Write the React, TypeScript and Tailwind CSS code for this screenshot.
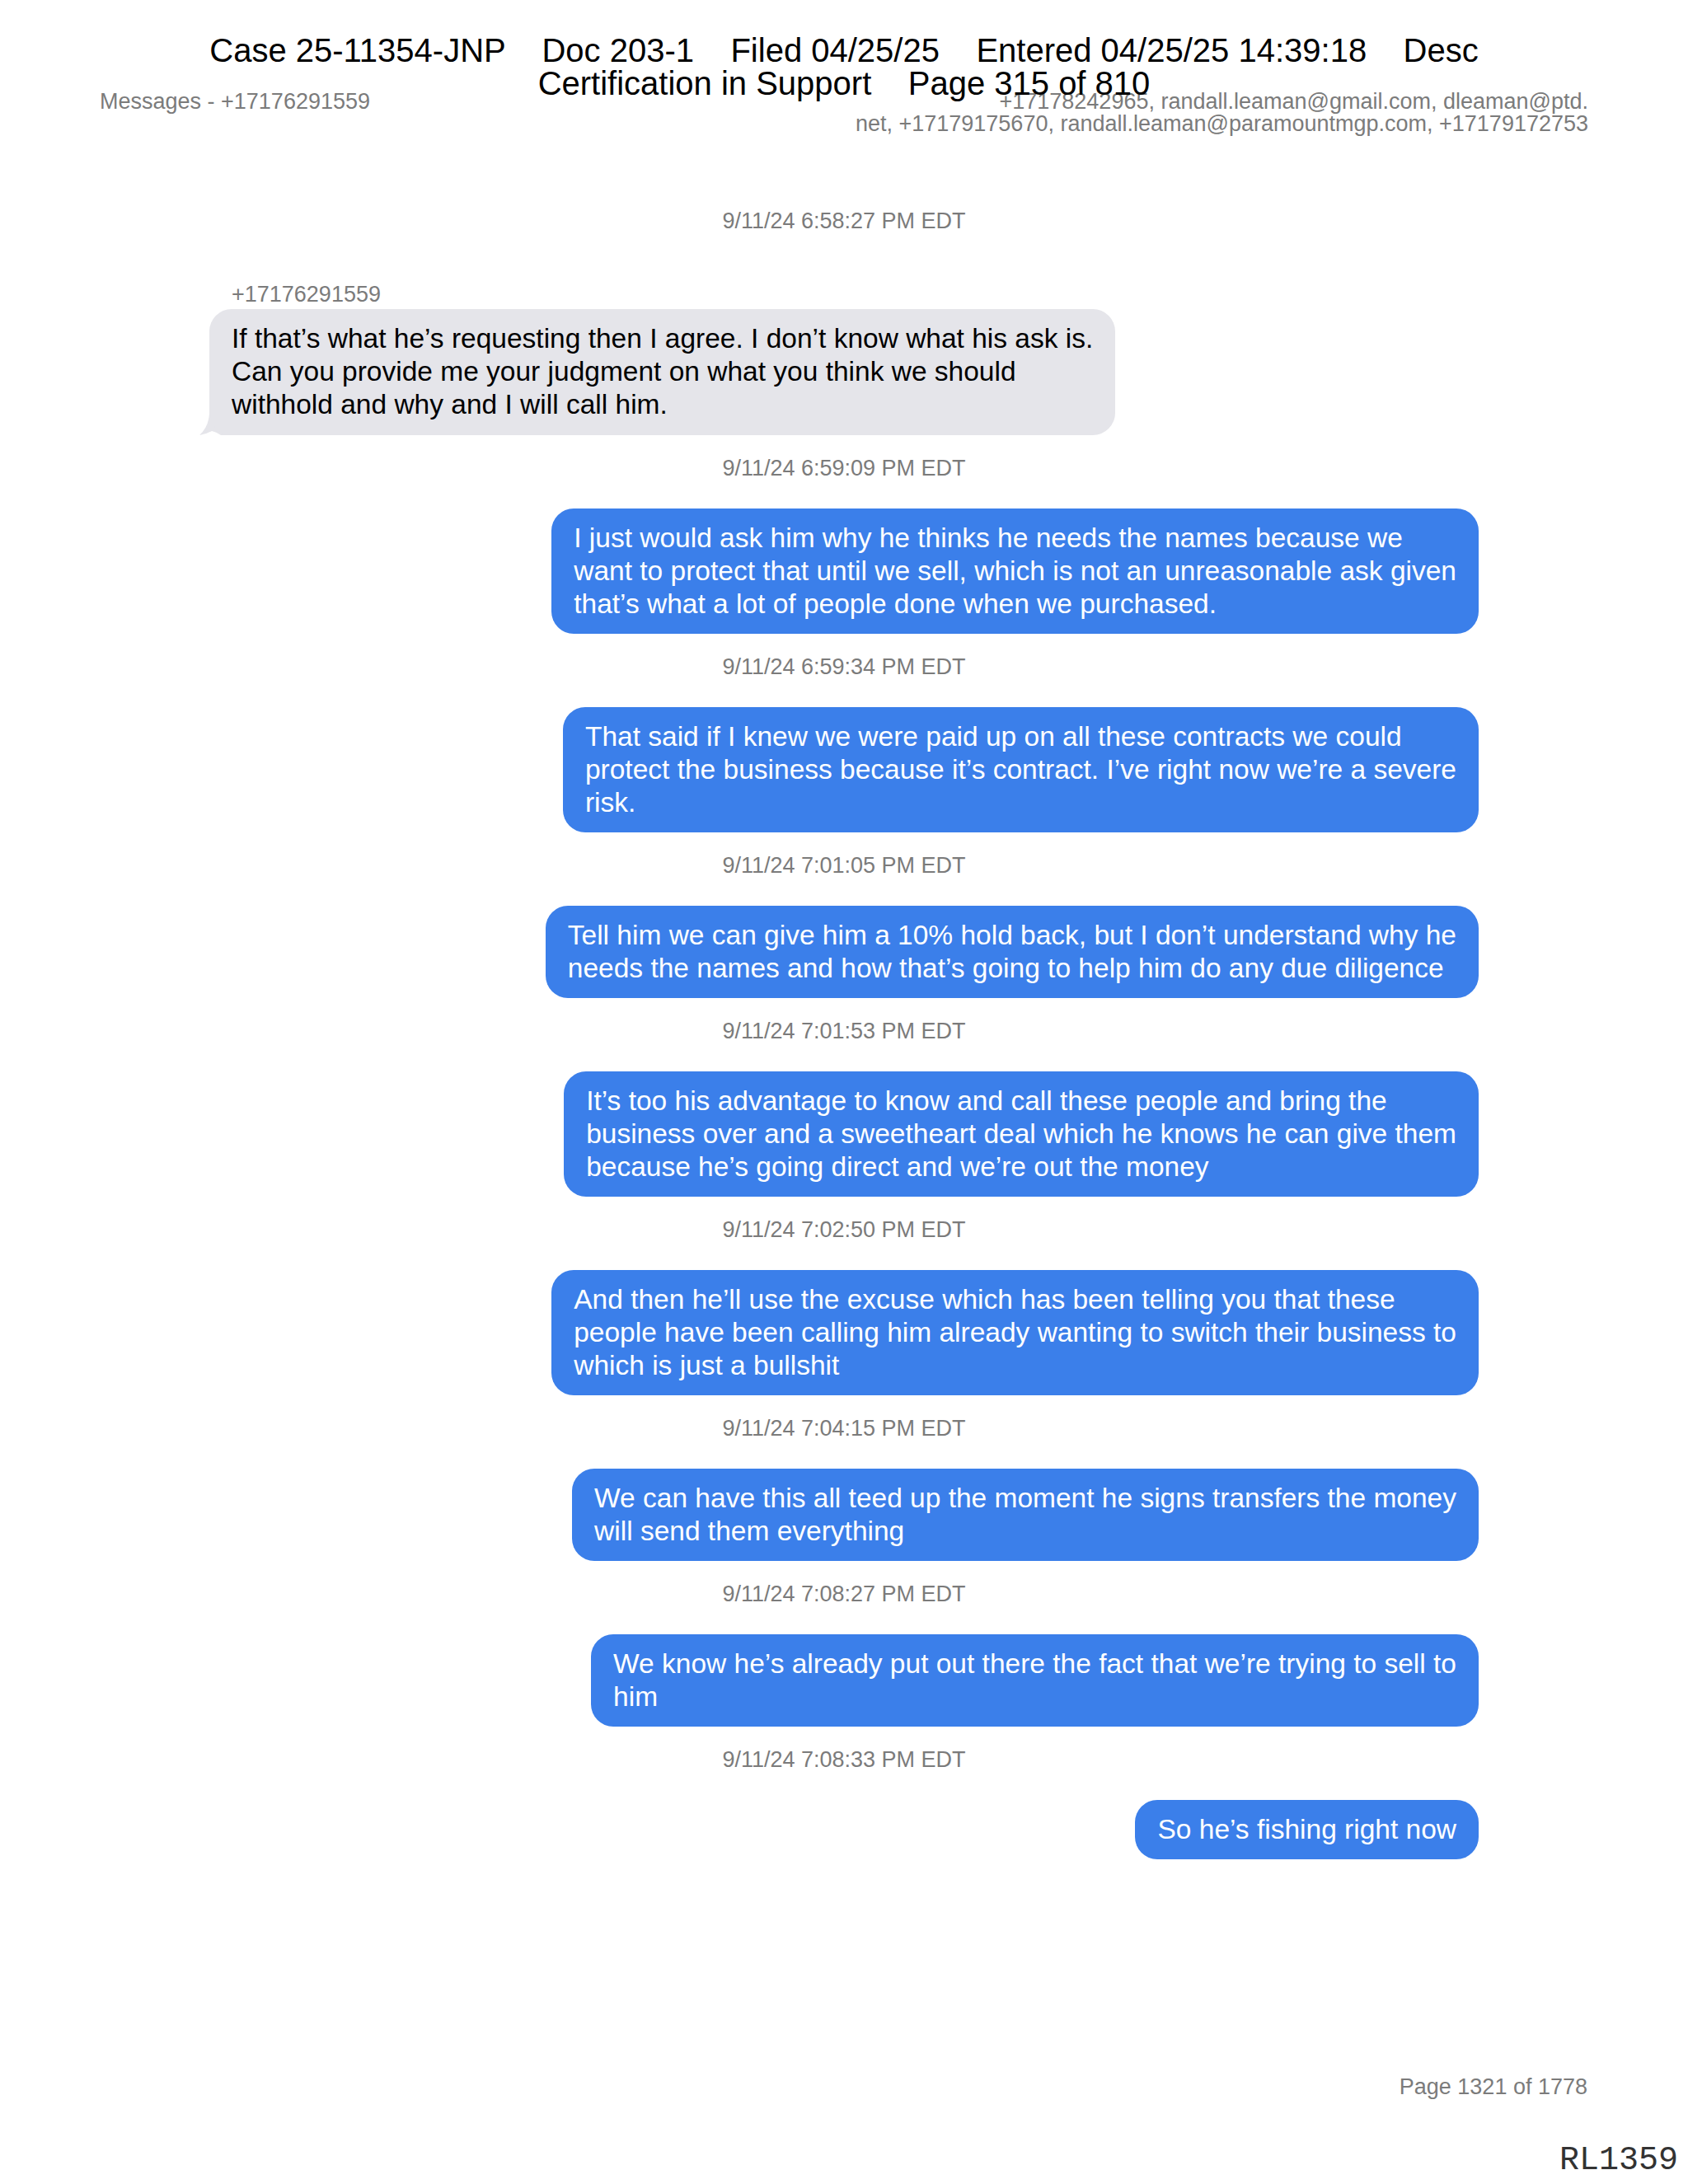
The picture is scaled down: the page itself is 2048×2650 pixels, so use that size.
import React from 'react';

type Message = {
  ts: string;
  sender?: string;
  incoming?: boolean;
  lines: string[];
};

const messages: Message[] = [
  {
    ts: '9/11/24 6:58:27 PM EDT',
    sender: '+17176291559',
    incoming: true,
    lines: [
      'If that’s what he’s requesting then I agree. I don’t know what his ask is.',
      'Can you provide me your judgment on what you think we should',
      'withhold and why and I will call him.',
    ],
  },
  {
    ts: '9/11/24 6:59:09 PM EDT',
    lines: [
      'I just would ask him why he thinks he needs the names because we',
      'want to protect that until we sell, which is not an unreasonable ask given',
      'that’s what a lot of people done when we purchased.',
    ],
  },
  {
    ts: '9/11/24 6:59:34 PM EDT',
    lines: [
      'That said if I knew we were paid up on all these contracts we could',
      'protect the business because it’s contract. I’ve right now we’re a severe',
      'risk.',
    ],
  },
  {
    ts: '9/11/24 7:01:05 PM EDT',
    lines: [
      'Tell him we can give him a 10% hold back, but I don’t understand why he',
      'needs the names and how that’s going to help him do any due diligence',
    ],
  },
  {
    ts: '9/11/24 7:01:53 PM EDT',
    lines: [
      'It’s too his advantage to know and call these people and bring the',
      'business over and a sweetheart deal which he knows he can give them',
      'because he’s going direct and we’re out the money',
    ],
  },
  {
    ts: '9/11/24 7:02:50 PM EDT',
    lines: [
      'And then he’ll use the excuse which has been telling you that these',
      'people have been calling him already wanting to switch their business to',
      'which is just a bullshit',
    ],
  },
  {
    ts: '9/11/24 7:04:15 PM EDT',
    lines: [
      'We can have this all teed up the moment he signs transfers the money',
      'will send them everything',
    ],
  },
  {
    ts: '9/11/24 7:08:27 PM EDT',
    lines: [
      'We know he’s already put out there the fact that we’re trying to sell to',
      'him',
    ],
  },
  {
    ts: '9/11/24 7:08:33 PM EDT',
    lines: ['So he’s fishing right now'],
  },
];

function Bubble({ msg }: { msg: Message }) {
  if (msg.incoming) {
    return (
      <div className="relative self-start mt-[2px]">
        <div className="relative z-10 bg-[#e5e5ea] text-black rounded-[27px] px-[27px] pt-[16px] pb-[17px] text-[33.5px] leading-[40px]">
          {msg.lines.map((l, i) => (
            <div key={i} className="whitespace-nowrap">
              {l}
            </div>
          ))}
        </div>
        {/* tail */}
        <svg
          className="absolute left-[-12px] bottom-0 z-0"
          width="44"
          height="44"
          viewBox="0 0 44 44"
        >
          <path
            d="M12 0 L44 0 L44 44 L26 44 Q20 40 15 39 Q8 43 0 44 Q11 34 12 18 Z"
            fill="#e5e5ea"
          />
        </svg>
      </div>
    );
  }
  return (
    <div className="self-end bg-[#3b7fea] text-white rounded-[27px] px-[27px] py-[16px] text-[33.5px] leading-[40px]">
      {msg.lines.map((l, i) => (
        <div key={i} className="whitespace-nowrap">
          {l}
        </div>
      ))}
    </div>
  );
}

export default function App() {
  return (
    <div
      className="relative w-[2048px] h-[2650px] bg-white flex flex-col overflow-hidden"
      style={{ fontFamily: '"Liberation Sans", Arial, sans-serif' }}
    >
      {/* court filing stamp, printed over the page */}
      <div className="absolute top-[41px] left-0 right-0 z-20 text-center text-black text-[40px] leading-[40px] whitespace-pre">
        <div>{'Case 25-11354-JNP    Doc 203-1    Filed 04/25/25    Entered 04/25/25 14:39:18    Desc'}</div>
        <div>{'Certification in Support    Page 315 of 810'}</div>
      </div>

      {/* export header */}
      <div className="flex justify-between items-start px-[121px] pt-[110px] text-[27px] leading-[27px] text-[#7b7b7b]">
        <div>Messages - +17176291559</div>
        <div className="text-right">
          <div>+17178242965, randall.leaman@gmail.com, dleaman@ptd.</div>
          <div>net, +17179175670, randall.leaman@paramountmgp.com, +17179172753</div>
        </div>
      </div>

      {/* conversation */}
      <div className="w-[1540px] mx-auto mt-[88px] flex flex-col">
        {messages.map((m, i) => (
          <div key={i} className="flex flex-col">
            <div
              className={
                i === 0
                  ? 'text-center text-[27px] leading-[32px] text-[#7b7b7b]'
                  : 'text-center text-[27px] leading-[32px] text-[#7b7b7b] mt-[24px]'
              }
            >
              {m.ts}
            </div>
            {m.sender ? (
              <div className="mt-[57px] pl-[27px] text-[27px] leading-[32px] text-[#7b7b7b]">
                {m.sender}
              </div>
            ) : (
              <div className="h-[33px]" />
            )}
            <Bubble msg={m} />
          </div>
        ))}
      </div>

      {/* footer */}
      <div className="mt-auto flex flex-col items-end">
        <div className="pr-[122px] text-[27px] leading-[27px] text-[#7b7b7b]">
          Page 1321 of 1778
        </div>
        <div
          className="mt-[56px] mb-[8px] pr-[12px] text-[40px] leading-[40px] text-[#333]"
          style={{ fontFamily: '"Liberation Mono", "Courier New", monospace' }}
        >
          RL1359
        </div>
      </div>
    </div>
  );
}
